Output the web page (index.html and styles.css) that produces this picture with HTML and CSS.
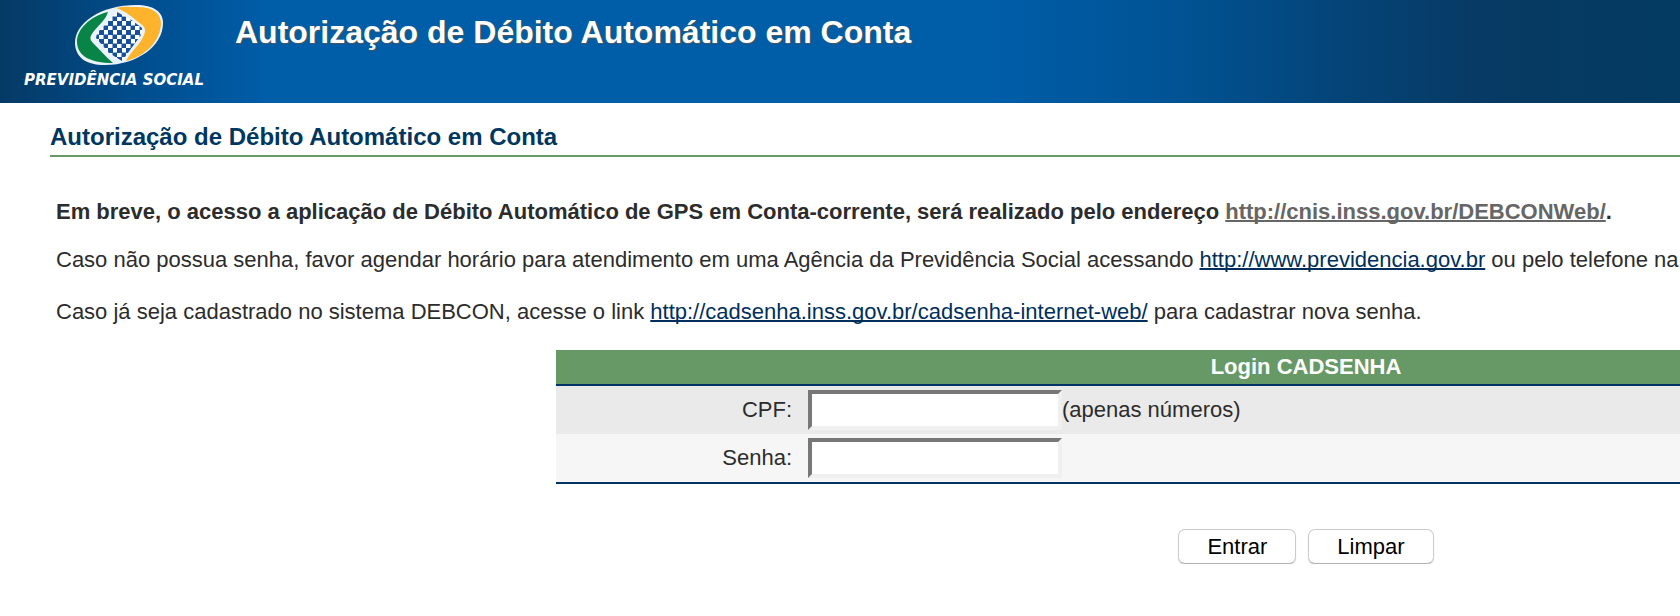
FILE: index.html
```
<!DOCTYPE html>
<html lang="pt-br">
<head>
<meta charset="UTF-8">
<title>Autorização de Débito Automático em Conta</title>
<link rel="stylesheet" href="styles.css">
</head>
<body>
<header class="topo">
  <div class="logo">
    <svg class="logo-marca" width="92" height="64" viewBox="0 0 92 64" aria-hidden="true">
      <defs>
        <pattern id="xadrez" width="9" height="9" patternUnits="userSpaceOnUse">
          <rect width="9" height="9" fill="#fff"/>
          <rect width="5" height="5" fill="#164f9c"/>
          <rect x="4.5" y="4.5" width="4.5" height="4.5" fill="#164f9c"/>
        </pattern>
      </defs>
      <path d="M3 41C2 20 29 2 64 2C82 2 91 9 91 20C91 43 65 62 33 62C13 62 4 54 3 41Z" fill="#e8f3fb"/>
      <path d="M36 9C18 13 4 27 5 40C6 53 18 60 41 60C34 54 27 46 21 40C17 36 18 33 22 28C28 21 34 16 36 9Z" fill="#088447"/>
      <path d="M44 5C52 3 58 4 65 4C81 4 89 10 89 21C88 40 71 54 54 58C59 48 68 42 72 32C74 27 73 24 69 21C61 15 54 8 44 5Z" fill="#fdb32b"/>
      <path d="M45 9L58 16L70 25L69 32L50 58L37 50L24 35L25 30Z" fill="url(#xadrez)"/>
    </svg>
    <span class="logo-texto">PREVIDÊNCIA SOCIAL</span>
  </div>
  <div class="sistema">Autorização de Débito Automático em Conta</div>
</header>
<main class="pagina">
  <h1>Autorização de Débito Automático em Conta</h1>
  <div class="conteudo">
    <p class="aviso">Em breve, o acesso a aplicação de Débito Automático de GPS em Conta-corrente, será realizado pelo endereço <a href="http://cnis.inss.gov.br/DEBCONWeb/">http://cnis.inss.gov.br/DEBCONWeb/</a>.</p>
    <p>Caso não possua senha, favor agendar horário para atendimento em uma Agência da Previdência Social acessando <a href="http://www.previdencia.gov.br">http://www.previdencia.gov.br</a> ou pelo telefone na</p>
    <p>Caso já seja cadastrado no sistema DEBCON, acesse o link <a href="http://cadsenha.inss.gov.br/cadsenha-internet-web/">http://cadsenha.inss.gov.br/cadsenha-internet-web/</a> para cadastrar nova senha.</p>
    <form class="form-login">
      <table class="login">
        <thead>
          <tr><th colspan="2">Login CADSENHA</th></tr>
        </thead>
        <tbody>
          <tr class="linha-par">
            <td class="rotulo"><label for="cpf">CPF:</label></td>
            <td><div class="campo"><input type="text" id="cpf" name="cpf" maxlength="11"><span>(apenas números)</span></div></td>
          </tr>
          <tr class="linha-impar">
            <td class="rotulo"><label for="senha">Senha:</label></td>
            <td><div class="campo"><input type="password" id="senha" name="senha"></div></td>
          </tr>
        </tbody>
      </table>
      <div class="botoes">
        <button type="submit">Entrar</button>
        <button type="reset">Limpar</button>
      </div>
    </form>
  </div>
</main>
</body>
</html>
```
FILE: styles.css
```
body {
  margin: 0;
  background: #fff;
  color: #2c2c2c;
  font-family: "Liberation Sans", Arial, Helvetica, sans-serif;
  font-size: 22px;
  line-height: 26px;
}
.topo {
  display: flex;
  align-items: flex-start;
  height: 103px;
  background: linear-gradient(to right, #053a66 0%, #004f90 9%, #005da8 16%, #005da8 59%, #005394 70%, #04457a 79%, #073a64 88%, #043b62 100%);
}
.logo {
  width: 212px;
  padding: 3px 0 0 24px;
  box-sizing: border-box;
  margin-right: 23px;
}
.logo-marca {
  display: block;
  margin-left: 48px;
}
.logo-texto {
  display: block;
  color: #fff;
  font-family: "DejaVu Sans", sans-serif;
  font-size: 15px;
  font-weight: bold;
  font-style: italic;
  line-height: 26px;
  white-space: nowrap;
}
.sistema {
  padding-top: 14px;
  color: #fff;
  font-size: 32px;
  font-weight: bold;
  line-height: 36px;
  text-shadow: 1px 1px 1px #555;
  white-space: nowrap;
}
.pagina {
  padding-left: 50px;
}
h1 {
  margin: 0;
  padding: 20px 0 4px;
  border-bottom: 2px solid #699869;
  color: #003760;
  font-size: 24px;
  line-height: 28px;
}
.conteudo {
  padding: 42px 0 0 6px;
}
p {
  margin: 0 0 26px;
  white-space: nowrap;
}
.aviso {
  margin-bottom: 22px;
  font-weight: bold;
}
a {
  color: #002f5d;
  text-decoration: underline;
  text-decoration-thickness: 2px;
  text-decoration-skip-ink: none;
}
.aviso a {
  color: #666;
}
.form-login {
  margin: -1px 0 0 500px;
}
.login {
  width: 100%;
  border-collapse: separate;
  border-spacing: 0;
  border-bottom: 2px solid #003366;
}
.login th {
  height: 34px;
  padding: 0 0 0 376px;
  background: #669966;
  border-bottom: 2px solid #003366;
  color: #fff;
}
.login td {
  height: 48px;
  padding: 0 0 0 8px;
}
.login .rotulo {
  width: 236px;
  padding: 0 8px 0 0;
  text-align: right;
}
.linha-par {
  background: #eaeaea;
}
.linha-impar {
  background: #f6f6f6;
}
.campo {
  display: flex;
  align-items: center;
}
input {
  box-sizing: border-box;
  width: 254px;
  height: 40px;
  border: 4px solid;
  border-color: #777 #f0f0f0 #f0f0f0 #777;
  background: #fff;
  font: inherit;
}
.botoes {
  display: flex;
  justify-content: center;
  gap: 12px;
  margin-top: 45px;
  padding-left: 376px;
}
button {
  height: 35px;
  padding: 0 28px;
  border: 1px solid #ccc;
  border-bottom-color: #b0b0b0;
  border-radius: 7px;
  background: #fff;
  box-shadow: 0 1px 1px #ddd;
  color: #000;
  font: inherit;
}
```
